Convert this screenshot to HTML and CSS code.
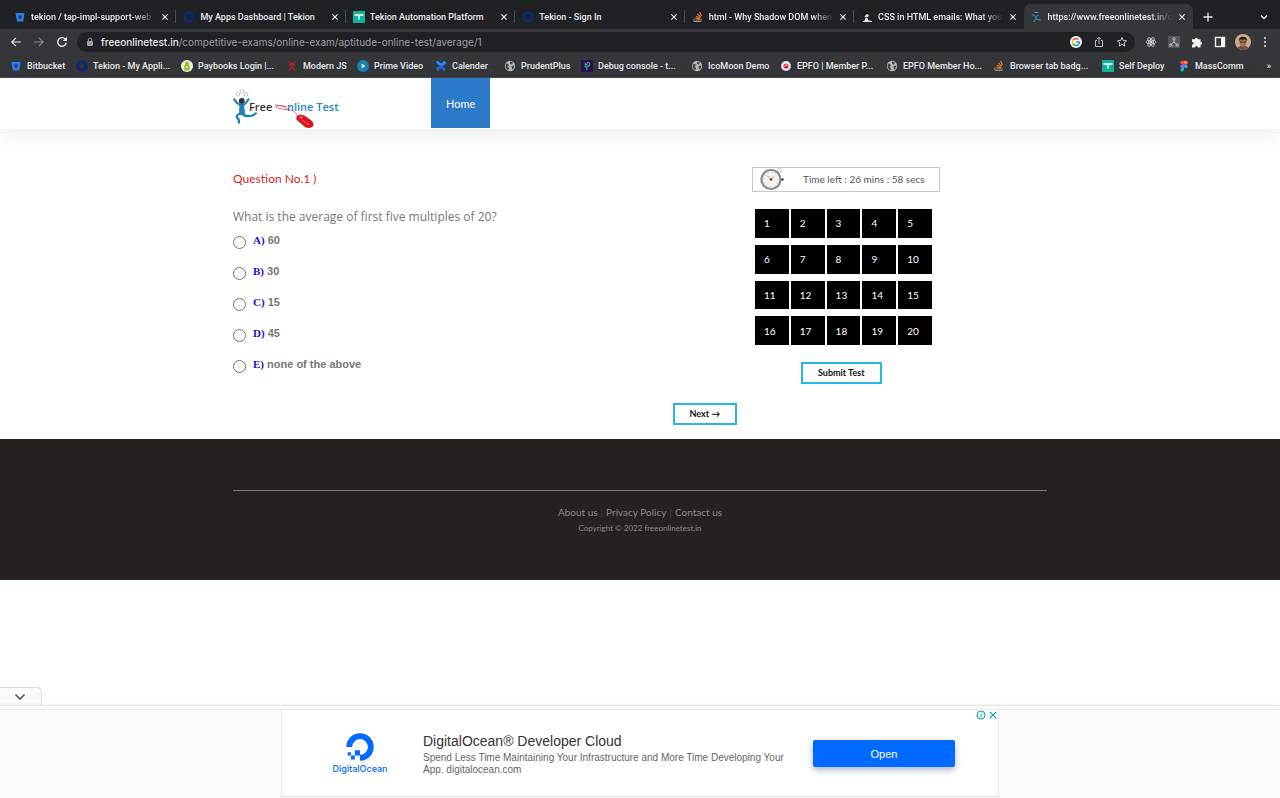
FILE: index.html
```html
<!DOCTYPE html>
<html lang="en">
<head>
<meta charset="utf-8">
<title>Free Online Test</title>
<link rel="stylesheet" href="styles.css">
</head>
<body>
<svg class="sprite" aria-hidden="true">
  <symbol id="bitbucket" viewBox="0 0 12 12"><path d="M1.5 2h9L9.3 10.6H2.9z" fill="#2f7de9"/><path d="M4.4 4.6h3.3l-.5 3H4.9z" fill="#17356b"/></symbol>
  <symbol id="ring" viewBox="0 0 12 12"><circle cx="6" cy="6" r="4.1" fill="none" stroke="#0a2a72" stroke-width="3.2"/></symbol>
  <symbol id="tekion" viewBox="0 0 12 12"><path d="M0 0h12v12H0z" fill="#12b398"/><path d="M1.500 4h9M6 4v4.500" stroke="#fff" stroke-width="1.500"/></symbol>
  <symbol id="stack" viewBox="0 0 12 12"><path d="M2 7.500v3h7v-3" fill="none" stroke="#8a8f94"/><path d="M3.300 9h4.500M3.400 7.200l4.500.7M4 5.200l4.200 1.600M5.400 3l3.400 3M7.600 1l2 4" stroke="#e0782c" stroke-width="1.200"/></symbol>
  <symbol id="person" viewBox="0 0 12 12"><circle cx="5.500" cy="4.300" r="2.300" fill="#e0cfc6"/><path d="M2.500 6C1.500 0 8.500-.5 8 3.500L5.500 3 4.500 4z" fill="#0c0c0c"/><path d="M1.500 11l2-1.500 1-2.500h2l1 2.500 3.500.5v1z" fill="#dfe6ea"/></symbol>
  <symbol id="runner" viewBox="0 0 12 12"><path d="M3.500 1.500h3.500" stroke="#999"/><circle cx="5.200" cy="3.200" r="1.200" fill="#222"/><path d="M1.500 3.500l3.200 2 3.200-1.700M5 5.500L4.800 8l5 1.200M4.800 8l-2.300 2.800" fill="none" stroke="#2689b8" stroke-width="1.300"/></symbol>
  <symbol id="paybooks" viewBox="0 0 12 12"><circle cx="6" cy="6" r="6" fill="#f4f7e8"/><rect x="3.200" y="4.500" width="5.600" height="6" rx="1.500" fill="#8dc21f"/><circle cx="6" cy="3.600" r="2" fill="#8dc21f"/><circle cx="6" cy="7.300" r="1" fill="#fff"/></symbol>
  <symbol id="modernjs" viewBox="0 0 12 12"><path d="M2.500 1l2 3.200L6 3l1.500 1.200L9.500 1M3 5h6M6 4v5M6 6L3 11M6 6l3 5" fill="none" stroke="#a6232c" stroke-width="1.400"/></symbol>
  <symbol id="prime" viewBox="0 0 12 12"><circle cx="6" cy="6" r="6" fill="#1684ae"/><path d="M4.700 3.800L8.500 6 4.700 8.200z" fill="#fff"/></symbol>
  <symbol id="confluence" viewBox="0 0 12 12"><path d="M.8 2.500L3 .8l3 2.600 3.500-2.600 1.800 2.500C8 7 5 7 .8 2.500z" fill="#2684ff"/><path d="M11.200 9.500L9 11.200 6 8.600l-3.500 2.600L.7 8.700C4 5 7 5 11.200 9.500z" fill="#1c66dd"/></symbol>
  <symbol id="globe" viewBox="0 0 12 12"><circle cx="6" cy="6" r="5.200" fill="#b4b6b9"/><path d="M2 3.500l2 .5 1 1.500-1.300 1L5 8l-.5 2.500C2 9.500 1 7 2 3.500zM6 1.500l3 1-1 2-2-.5zM7.500 6l3-.5-1 3-1.500 1z" fill="#46484b"/></symbol>
  <symbol id="debug" viewBox="0 0 12 12"><path d="M0 0h12v12H0z" fill="#2c0f4e"/><path d="M4 4.500h2.200M4 7h2M6 10.200V3.500c0-1.600 2.800-1.400 2.800.8S7 6.500 6 6.500M4.200 2.500v5" fill="none" stroke="#2fa58d" stroke-width="1.100"/></symbol>
  <symbol id="epfo" viewBox="0 0 12 12"><circle cx="6" cy="6" r="4.900" fill="#fff"/><circle cx="6" cy="6" r="4.400" fill="none" stroke="#6f84c4" stroke-width=".7" stroke-dasharray="1 1"/><circle cx="6" cy="6" r="2.600" fill="#d9202e"/><path d="M4.500 6.500L6 4.500 7.500 6" fill="none" stroke="#fff" stroke-width=".8"/></symbol>
  <symbol id="figma" viewBox="0 0 12 12"><path d="M6 .8H4a1.800 1.800 0 000 3.600h2z" fill="#f24e1e"/><path d="M6 .8h2a1.800 1.800 0 010 3.600H6z" fill="#ff7262"/><path d="M6 4.400H4A1.800 1.800 0 004 8h2z" fill="#a259ff"/><circle cx="7.800" cy="6.200" r="1.800" fill="#1abcfe"/><path d="M6 8H4a1.800 1.800 0 102 1.800z" fill="#0acf83"/></symbol>
  <symbol id="close" viewBox="0 0 8 8"><path d="M1.400 1.400l5.200 5.200M6.600 1.400L1.400 6.600" stroke="currentColor" stroke-width="1.200"/></symbol>
</svg>

<header class="browser">
  <div class="tabstrip">
    <div class="tab"><svg class="icon"><use href="#bitbucket"/></svg><span class="tab-title fade">tekion / tap-impl-support-web</span><button class="close" aria-label="Close tab"><svg><use href="#close"/></svg></button></div>
    <div class="tab"><svg class="icon"><use href="#ring"/></svg><span class="tab-title">My Apps Dashboard | Tekion</span><button class="close" aria-label="Close tab"><svg><use href="#close"/></svg></button></div>
    <div class="tab"><svg class="icon"><use href="#tekion"/></svg><span class="tab-title">Tekion Automation Platform</span><button class="close" aria-label="Close tab"><svg><use href="#close"/></svg></button></div>
    <div class="tab"><svg class="icon"><use href="#ring"/></svg><span class="tab-title">Tekion - Sign In</span><button class="close" aria-label="Close tab"><svg><use href="#close"/></svg></button></div>
    <div class="tab"><svg class="icon"><use href="#stack"/></svg><span class="tab-title fade">html - Why Shadow DOM when</span><button class="close" aria-label="Close tab"><svg><use href="#close"/></svg></button></div>
    <div class="tab last"><svg class="icon"><use href="#person"/></svg><span class="tab-title fade">CSS in HTML emails: What you</span><button class="close" aria-label="Close tab"><svg><use href="#close"/></svg></button></div>
    <div class="tab active"><svg class="icon"><use href="#runner"/></svg><span class="tab-title fade">https://www.freeonlinetest.in/c</span><button class="close" aria-label="Close tab"><svg><use href="#close"/></svg></button></div>
    <div class="strip-tools">
      <button aria-label="New tab"><svg class="icon" viewBox="0 0 12 12"><path d="M6 1.500v9M1.500 6h9" stroke="currentColor" stroke-width="1.300"/></svg></button>
      <button aria-label="Search tabs"><svg class="icon" viewBox="0 0 12 12"><path d="M3 4.500l3 3 3-3" fill="none" stroke="currentColor" stroke-width="1.400"/></svg></button>
    </div>
  </div>
  <div class="toolbar">
    <div class="nav">
      <button aria-label="Back"><svg class="icon" viewBox="0 0 12 12"><path d="M11 6H2M6 1.800L1.800 6 6 10.200" fill="none" stroke="currentColor" stroke-width="1.200"/></svg></button>
      <button class="dim" aria-label="Forward"><svg class="icon" viewBox="0 0 12 12"><path d="M1 6h9M6 1.800L10.200 6 6 10.200" fill="none" stroke="currentColor" stroke-width="1.200"/></svg></button>
      <button aria-label="Reload"><svg class="icon" viewBox="0 0 12 12"><path d="M10.200 7A4.300 4.300 0 119.200 3L10 4" fill="none" stroke="currentColor" stroke-width="1.400"/><path d="M11 .8v4.300H6.800z" fill="currentColor"/></svg></button>
    </div>
    <div class="omnibox">
      <svg class="lock" viewBox="0 0 8 10"><rect x="1" y="4" width="6" height="5" rx="1" fill="#9aa0a6"/><path d="M2.300 4.200V2.800a1.700 1.700 0 013.400 0v1.400" fill="none" stroke="#9aa0a6"/></svg>
      <span class="url"><b>freeonlinetest.in</b>/competitive-exams/online-exam/aptitude-online-test/average/1</span>
      <svg class="icon" viewBox="0 0 12 12"><circle cx="6" cy="6" r="6" fill="#fff"/><g fill="none" stroke-width="1.500"><path d="M8.500 3.500A3.500 3.500 0 003 4.200" stroke="#ea4335"/><path d="M3 4.200a3.500 3.500 0 000 3.600" stroke="#fbbc05"/><path d="M3 7.800a3.500 3.500 0 005.300.8" stroke="#34a853"/><path d="M8.300 8.600A3.500 3.500 0 009.500 6H6" stroke="#4285f4"/></g></svg>
      <svg class="icon" viewBox="0 0 12 12"><path d="M4 4.500H2.500v6h7v-6H8M6 8V1.500M4 3.300l2-2 2 2" fill="none" stroke="#bdc1c6"/></svg>
      <svg class="icon" viewBox="0 0 12 12"><path d="M6 1.500l1.300 3 3.200.3-2.400 2.100.7 3.200L6 8.400l-2.800 1.700.7-3.200-2.400-2.100 3.200-.3z" fill="none" stroke="#c8cbcf"/></svg>
    </div>
    <div class="extensions">
      <svg class="icon" viewBox="0 0 12 12"><g fill="none" stroke="#d5d7da" stroke-width=".8"><ellipse cx="6" cy="6" rx="5" ry="2"/><ellipse cx="6" cy="6" rx="5" ry="2" transform="rotate(60 6 6)"/><ellipse cx="6" cy="6" rx="5" ry="2" transform="rotate(120 6 6)"/></g><circle cx="6" cy="6" r="1.200" fill="#d5d7da"/></svg>
      <svg class="icon" viewBox="0 0 12 12"><path d="M0 0h12v12H0z" fill="#56585c"/><g fill="none" stroke="#c7c9cc" stroke-width=".9"><circle cx="6" cy="2.800" r="1.200"/><circle cx="2.800" cy="9" r="1.200"/><circle cx="9.200" cy="9" r="1.200"/><path d="M6 4v2L3.500 8M6 6l2.500 2"/></g></svg>
      <svg class="icon" viewBox="0 0 12 12"><path d="M1 3.200h2.800a1.500 1.500 0 113 0h2.700v2.600a1.500 1.500 0 110 3V11.500H6.900a1.500 1.500 0 10-3 0H1V8.800a1.500 1.500 0 100-3z" fill="#f1f3f4"/></svg>
      <svg class="icon" viewBox="0 0 12 12"><rect x="1.500" y="1.500" width="9" height="9" fill="none" stroke="#f1f3f4" stroke-width="1.400"/><path d="M7 1h4v10H7z" fill="#f1f3f4"/></svg>
      <svg class="avatar" viewBox="0 0 16 16"><circle cx="8" cy="8" r="8" fill="#c9ab8d"/><path d="M2.500 13.800Q8 9 13.500 13.800A8 8 0 012.500 13.800z" fill="#6d4a43"/><ellipse cx="8" cy="8.300" rx="3.600" ry="4.600" fill="#a46d50"/><path d="M4 7.500C2.500 1 13.500 1 12 7.500L11 5.600 5 5.500z" fill="#201917"/><path d="M5 8h2.500M8.500 8H11" stroke="#332320"/></svg>
      <svg class="icon" viewBox="0 0 12 12"><g fill="#e8eaed"><circle cx="6" cy="2" r="1"/><circle cx="6" cy="6" r="1"/><circle cx="6" cy="10" r="1"/></g></svg>
    </div>
  </div>
  <nav class="bookmarks" aria-label="Bookmarks">
    <a href="#"><svg class="icon"><use href="#bitbucket"/></svg>Bitbucket</a>
    <a href="#"><svg class="icon"><use href="#ring"/></svg>Tekion - My Appli...</a>
    <a href="#"><svg class="icon"><use href="#paybooks"/></svg>Paybooks Login |...</a>
    <a href="#"><svg class="icon"><use href="#modernjs"/></svg>Modern JS</a>
    <a href="#"><svg class="icon"><use href="#prime"/></svg>Prime Video</a>
    <a href="#"><svg class="icon"><use href="#confluence"/></svg>Calender</a>
    <a href="#"><svg class="icon"><use href="#globe"/></svg>PrudentPlus</a>
    <a href="#"><svg class="icon"><use href="#debug"/></svg>Debug console - t...</a>
    <a href="#"><svg class="icon"><use href="#globe"/></svg>IcoMoon Demo</a>
    <a href="#"><svg class="icon"><use href="#epfo"/></svg>EPFO | Member P...</a>
    <a href="#"><svg class="icon"><use href="#globe"/></svg>EPFO Member Ho...</a>
    <a href="#"><svg class="icon"><use href="#stack"/></svg>Browser tab badg...</a>
    <a href="#"><svg class="icon"><use href="#tekion"/></svg>Self Deploy</a>
    <a href="#"><svg class="icon"><use href="#figma"/></svg>MassComm</a>
    <button aria-label="More bookmarks">»</button>
  </nav>
</header>

<header class="site-header">
  <div class="container header-row">
    <a class="logo" href="#" aria-label="Free Online Test">
      <svg viewBox="0 0 108 40">
        <g fill="none" stroke="#aaa"><circle cx="5" cy="5" r="1.800" stroke-dasharray="2 1"/><circle cx="9" cy="2.500" r="1.800" stroke-dasharray="2 1"/><circle cx="13" cy="5.500" r="1.800" stroke-dasharray="2 1"/></g>
        <path d="M.8 9.500Q3 14 8 16.500M16 9.500Q14 13.500 10 16.500" fill="none" stroke="#1c80b4" stroke-width="2"/>
        <path d="M6.500 15h4.500l1 10H6z" fill="#1c80b4"/>
        <path d="M8 24.500q-5 1-4 4 3 2 1.500 6M8 24.500q4 3 9 2.500 5-1 6.500-3.500" fill="none" stroke="#1c80b4" stroke-width="2.200"/>
        <circle cx="8.800" cy="12" r="2.900" fill="#333"/>
        <text x="16" y="22" class="logo-dark">Free</text>
        <text x="54" y="22" class="logo-blue">nline Test</text>
        <path d="M54 20.500c-3-5-10-4-11-3s6 3 11 3c5 0 9 2 11 8M42 16l12 1.500" fill="none" stroke="#c9485a" stroke-width=".8"/>
        <path d="M64 27q3-3 8 0l7 5q3 4 0 6-3 2-7 0l-7-6q-3-2-1-5z" fill="#d9121b"/>
        <path d="M66 27.500l4 0-2 3z" fill="#ff7777"/><path d="M69 31l7 5" stroke="#f66"/>
      </svg>
    </a>
    <nav class="menu"><a href="#">Home</a></nav>
  </div>
</header>

<main class="container">
  <div class="columns">
    <form class="question">
      <h1>Question No.1 )</h1>
      <p>What is the average of first five multiples of 20?</p>
      <label><input type="radio" name="answer"><span><i>A)</i> 60</span></label>
      <label><input type="radio" name="answer"><span><i>B)</i> 30</span></label>
      <label><input type="radio" name="answer"><span><i>C)</i> 15</span></label>
      <label><input type="radio" name="answer"><span><i>D)</i> 45</span></label>
      <label><input type="radio" name="answer"><span><i>E)</i> none of the above</span></label>
    </form>
    <aside class="panel">
      <div class="timer">
        <svg viewBox="0 0 26 24"><circle cx="19.500" cy="3.500" r="2" fill="#fff" stroke="#bbb"/><circle cx="11" cy="12.500" r="9.500" fill="#f6f4f4" stroke="#8b8b8b" stroke-width="2.200"/><circle cx="11" cy="12.500" r="7.300" fill="none" stroke="#888" stroke-width=".8" stroke-dasharray=".8 3"/><path d="M11 12.500L7 8.500M11 12.500l3-3" stroke="#e77"/><circle cx="11" cy="12.500" r="1.300" fill="#b02028"/><circle cx="22.500" cy="12.500" r="1.200" fill="#333"/></svg>
        <span>Time left : 26 mins : 58 secs</span>
      </div>
      <div class="numbers">
        <button>1</button><button>2</button><button>3</button><button>4</button><button>5</button>
        <button>6</button><button>7</button><button>8</button><button>9</button><button>10</button>
        <button>11</button><button>12</button><button>13</button><button>14</button><button>15</button>
        <button>16</button><button>17</button><button>18</button><button>19</button><button>20</button>
      </div>
      <button class="outline">Submit Test</button>
    </aside>
  </div>
  <button class="outline next">Next →</button>
</main>

<footer class="site-footer">
  <div class="container">
    <nav><a href="#">About us</a><span>|</span><a href="#">Privacy Policy</a><span>|</span><a href="#">Contact us</a></nav>
    <small>Copyright © 2022 freeonlinetest.in</small>
  </div>
</footer>

<section class="anchor-ad" aria-label="Advertisement">
  <button class="collapse" aria-label="Collapse"><svg viewBox="0 0 12 8"><path d="M1.500 1.500L6 6l4.500-4.500" fill="none" stroke="#555" stroke-width="1.600"/></svg></button>
  <div class="ad-bar">
    <div class="ad">
      <div class="brand">
        <svg viewBox="0 0 28 28"><path d="M3.200 14A10.800 10.800 0 1114 24.800" fill="none" stroke="#0069ff" stroke-width="5.800"/><path d="M8.800 17.300h5.200v5.200H8.800zM4.900 22.500h3.900v3.900H4.900zM1.700 19.300h3.200v3.200H1.700z" fill="#0069ff"/></svg>
        <span>DigitalOcean</span>
      </div>
      <div class="copy"><h2>DigitalOcean® Developer Cloud</h2><p>Spend Less Time Maintaining Your Infrastructure and More Time Developing Your App. digitalocean.com</p></div>
      <button class="open">Open</button>
      <div class="choices"><svg viewBox="0 0 10 10"><circle cx="5" cy="5" r="4" fill="none" stroke="#00a0b5"/><path d="M5 4.300v3M5 2.500v1" stroke="#00a0b5"/></svg><svg viewBox="0 0 10 10"><path d="M1.800 1.800l6.400 6.400M8.200 1.800L1.800 8.200" stroke="#00a0b5" stroke-width="1.200"/></svg></div>
    </div>
  </div>
</section>
</body>
</html>
```

FILE: styles.css
```css
* { box-sizing: border-box; }
body {
  margin: 0;
  min-height: 100vh;
  display: flex;
  flex-direction: column;
  background: #fff;
  color: #777;
  font-family: Lato, "Open Sans", sans-serif;
}
button { margin: 0; padding: 0; border: 0; background: none; color: inherit; font: inherit; }
a { color: inherit; text-decoration: none; }
svg { display: block; flex: none; }
.sprite { display: none; }
.icon { width: 12px; height: 12px; }
.container { width: 100%; max-width: 814px; margin: 0 auto; }

.browser { background: #35363a; color: #e8eaed; font: 500 9px/12px Roboto, sans-serif; border-bottom: 1px solid #4a4b4f; }
.tabstrip { display: flex; height: 29px; padding: 4px 0 0 7px; background: #202124; }
.tab { display: flex; flex: 0 1 170px; min-width: 0; align-items: center; gap: 5px; padding: 0 7px 0 7px; position: relative; }
.tab::after { content: ""; position: absolute; right: 0; top: 6px; height: 13px; border-right: 1px solid #4a4c50; }
.tab.last::after, .tab.active::after { display: none; }
.tab.active { background: #35363a; border-radius: 7px 7px 0 0; }
.tab-title { flex: 1; min-width: 0; overflow: hidden; white-space: nowrap; }
.fade { -webkit-mask-image: linear-gradient(90deg, #000 82%, transparent); mask-image: linear-gradient(90deg, #000 82%, transparent); }
.close svg { width: 8px; height: 8px; }
.strip-tools { flex: 0 0 87px; margin-left: auto; display: flex; align-items: center; justify-content: space-between; padding: 0 10px 0 9px; }
.toolbar { display: flex; align-items: center; height: 25px; padding: 0 10px; }
.nav { display: flex; gap: 11px; width: 67px; }
.dim { color: #85878b; }
.omnibox { flex: 1; display: flex; align-items: center; gap: 11px; height: 20px; padding: 0 7px 0 9px; border-radius: 10px; background: #202124; color: #9aa0a6; font: 400 10px/12px Inter, sans-serif; }
.omnibox b { color: #e8eaed; font-weight: 500; }
.lock { width: 8px; height: 10px; margin-right: -4px; }
.url { flex: 1; white-space: nowrap; }
.extensions { display: flex; align-items: center; gap: 11px; padding-left: 10px; }
.extensions .icon:last-child { margin: 0 -1px; }
.avatar { width: 16px; height: 16px; margin: 0 -2px; }
.bookmarks {
  display: grid;
  grid-template-columns: 66fr 105fr 105fr 71fr 78fr 69fr 77fr 110fr 89fr 106fr 107fr 109fr 76fr 80fr 22fr;
  align-items: center;
  height: 23px;
  padding-left: 10px;
}
.bookmarks a { display: flex; gap: 5px; min-width: 0; white-space: nowrap; }

.site-header { box-shadow: 0 4px 20px rgba(0, 0, 0, .09); }
.header-row { display: flex; height: 51px; }
.logo { width: 198px; padding-top: 11px; }
.logo svg { width: 108px; height: 40px; }
.logo text { font: 600 11px "Open Sans", sans-serif; }
.logo-dark { fill: #333; }
.logo-blue { fill: #2789ba; }
.menu a { display: flex; align-items: center; height: 50px; padding: 0 15px; background: #2a7ac7; color: #fff; font-size: 11px; }

.columns { display: grid; grid-template-columns: 1fr 295px; padding-top: 38px; }
.question h1 { margin: 0; color: #e01b22; font-size: 12px; line-height: 24px; font-weight: 400; }
.question p { margin: 16px 0 0; font-family: "Open Sans", sans-serif; font-size: 12px; line-height: 20px; }
.question label { display: flex; align-items: center; gap: 7px; height: 31px; font: 700 11px/16px "Liberation Sans", sans-serif; }
.question label span { padding-bottom: 6px; }
.question i { color: #1a0dd8; font-family: "Liberation Serif", serif; font-style: normal; }
.question input { appearance: none; width: 13px; height: 13px; margin: 0; border: 1px solid #767676; border-radius: 50%; background: #fff; }
.timer { display: flex; align-items: center; width: 188px; height: 25px; padding: 0 0 1px 7px; gap: 17px; border: 1px solid #c8c8c8; color: #555; font-size: 10px; }
.timer svg { width: 26px; height: 24px; }
.numbers { display: grid; grid-template-columns: repeat(5, 1fr); grid-auto-rows: 1fr; gap: 7px 2px; width: 177px; height: 136px; margin: 17px 0 0 3px; }
.numbers button { padding-left: 9px; background: #000; color: #fff; font-size: 10px; text-align: left; }
.outline { display: block; height: 22px; padding: 0 15px; border: 2px solid #27b8e2; background: #fff; color: #111; font-size: 9px; font-weight: 700; line-height: 18px; }
.panel .outline { margin: 17px 0 0 49px; }
.next { margin: 19px 0 14px 54%; }

.site-footer { background: #26211f; color: #8e8a88; text-align: center; padding: 51px 0 44px; }
.site-footer .container { border-top: 1px solid #827e7b; padding-top: 13px; }
.site-footer nav { display: flex; justify-content: center; gap: 3px; font-size: 10px; line-height: 16px; }
.site-footer nav span { color: #45403d; }
.site-footer small { display: block; font-size: 8px; line-height: 16px; }

.anchor-ad { margin-top: auto; font-family: "Liberation Sans", sans-serif; }
.collapse { display: flex; align-items: center; justify-content: center; width: 42px; height: 18px; padding-right: 2px; border: 1px solid #ddd; border-width: 1px 1px 0 0; border-radius: 0 5px 0 0; background: #fafafa; }
.collapse svg { width: 12px; height: 8px; }
.ad-bar { padding-bottom: 1px; background: #fafafa; border-top: 1px solid #e8e8e8; box-shadow: 0 -1px 2px rgba(0, 0, 0, .06); }
.ad-bar::before { content: ""; display: block; height: 3px; border-bottom: 1px solid #ececec; }
.ad { display: flex; align-items: center; max-width: 718px; height: 87px; margin: 0 auto; padding: 1px 43px 0 51px; border: 1px solid #e8e8e8; border-top: 0; background: #fff; position: relative; }
.brand { display: flex; flex-direction: column; align-items: center; gap: 2px; width: 54px; color: #0069ff; font: 500 9px/12px Inter, sans-serif; }
.brand svg { width: 28px; height: 28px; }
.copy { flex: 1; padding: 0 20px 0 36px; }
.copy h2 { margin: 0; color: #333; font-size: 14px; line-height: 18px; font-weight: 400; }
.copy p { margin: 2px 0 0; color: #666; font-size: 10px; line-height: 12px; }
.open { width: 142px; height: 27px; border-radius: 2px; background: #0069ff; color: #fff; font-size: 11px; box-shadow: 0 3px 7px rgba(30, 50, 100, .35); }
.choices { display: flex; gap: 2px; position: absolute; top: 0; right: 0; }
.choices svg { width: 10px; height: 10px; }
```
